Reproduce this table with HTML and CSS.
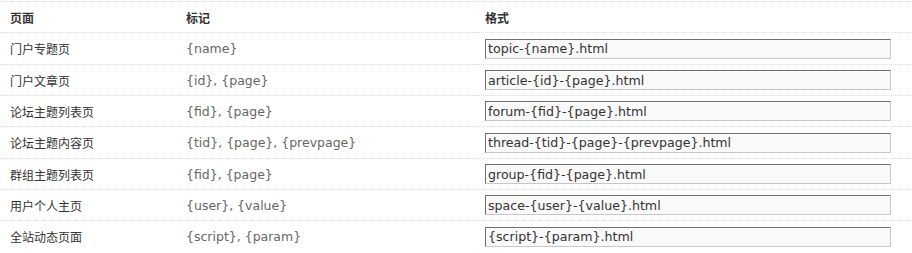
FILE: index.html
```html
<!DOCTYPE html>
<html>
<head>
<meta charset="utf-8">
<link rel="stylesheet" href="styles.css">
</head>
<body>
<table class="rules">
  <thead>
    <tr><th class="c1">页面</th><th class="c2">标记</th><th class="c3">格式</th></tr>
  </thead>
  <tbody>
    <tr><td>门户专题页</td><td class="tag">{name}</td><td><input class="fmt" type="text" value="topic-{name}.html"></td></tr>
    <tr><td>门户文章页</td><td class="tag">{id}, {page}</td><td><input class="fmt" type="text" value="article-{id}-{page}.html"></td></tr>
    <tr><td>论坛主题列表页</td><td class="tag">{fid}, {page}</td><td><input class="fmt" type="text" value="forum-{fid}-{page}.html"></td></tr>
    <tr><td>论坛主题内容页</td><td class="tag">{tid}, {page}, {prevpage}</td><td><input class="fmt" type="text" value="thread-{tid}-{page}-{prevpage}.html"></td></tr>
    <tr><td>群组主题列表页</td><td class="tag">{fid}, {page}</td><td><input class="fmt" type="text" value="group-{fid}-{page}.html"></td></tr>
    <tr><td>用户个人主页</td><td class="tag">{user}, {value}</td><td><input class="fmt" type="text" value="space-{user}-{value}.html"></td></tr>
    <tr class="last"><td>全站动态页面</td><td class="tag">{script}, {param}</td><td><input class="fmt" type="text" value="{script}-{param}.html"></td></tr>
  </tbody>
</table>
</body>
</html>
```

FILE: styles.css
```css
html, body {
  margin: 0;
  padding: 0;
  background: #fff;
}
body {
  padding-top: 1px;
  font-family: "DejaVu Sans", "Noto Sans CJK SC", sans-serif;
  font-size: 12px;
  color: #333;
}
.rules {
  width: 912px;
  border-collapse: collapse;
  table-layout: fixed;
}
.rules th, .rules td {
  height: 30px;
  padding: 0 0 0 10px;
  border-top: 1px dotted #d5dde6;
  text-align: left;
  vertical-align: middle;
  white-space: nowrap;
}
.rules tbody tr:nth-child(3n+1) td {
  height: 31px;
}
.rules th {
  font-weight: bold;
  color: #333;
}
.c1 { width: 166px; }
.c2 { width: 289px; }
.tag {
  color: #666;
  font-size: 12.5px;
}
.fmt {
  box-sizing: border-box;
  width: 406px;
  height: 20px;
  margin: 0;
  padding: 0 2px;
  font-family: "DejaVu Sans", sans-serif;
  font-size: 12.6px;
  color: #333;
  background: #f9f9f9;
  border: 1px solid;
  border-color: #707070 #c8c8c8 #c8c8c8 #707070;
  display: block;
}
```
